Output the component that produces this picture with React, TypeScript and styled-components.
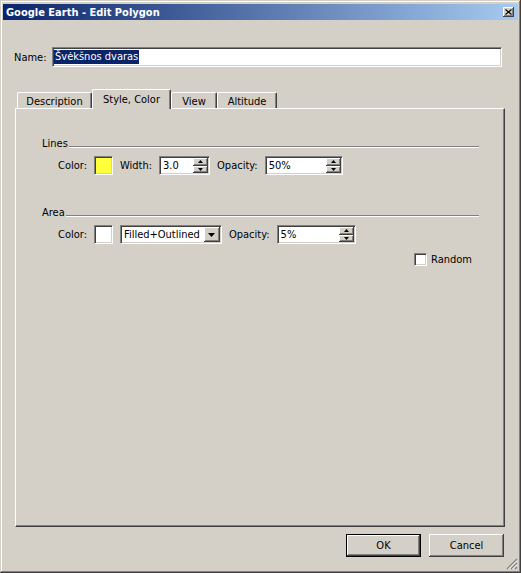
import styled, { createGlobalStyle, css } from "styled-components";

const GlobalStyle = createGlobalStyle`
  html, body {
    margin: 0;
    padding: 0;
    background: #d4d0c8;
  }
  * {
    box-sizing: border-box;
  }
  body {
    font-family: "DejaVu Sans Condensed", "Liberation Sans", Arial, sans-serif;
    font-size: 11px;
    color: #000;
  }
`;

const sunken = css`
  border: 1px solid;
  border-color: #808080 #ffffff #ffffff #808080;
  box-shadow: inset 1px 1px #404040, inset -1px -1px #d4d0c8;
`;

const raised = css`
  background: #d4d0c8;
  box-shadow: inset -1px -1px #404040, inset 1px 1px #ffffff,
    inset -2px -2px #808080, inset 2px 2px #d4d0c8;
`;

const Window = styled.div`
  position: relative;
  width: 521px;
  height: 573px;
  display: flex;
  flex-direction: column;
  padding: 3px;
  background: #d4d0c8;
  box-shadow: inset -1px -1px #404040, inset 1px 1px #d4d0c8,
    inset -2px -2px #808080, inset 2px 2px #ffffff;
`;

const TitleBar = styled.div`
  height: 16px;
  margin-top: 1px;
  display: flex;
  align-items: center;
  justify-content: space-between;
  padding: 0 3px;
  background: linear-gradient(to right, #0a246a, #a6caf0);
  color: #fff;
  font-weight: bold;
  font-size: 11px;
`;

const CloseBtn = styled.div`
  ${raised};
  width: 11px;
  height: 10px;
  display: flex;
  align-items: center;
  justify-content: center;
  margin-right: 1px;
`;

const Content = styled.div`
  flex: 1;
  display: flex;
  flex-direction: column;
  padding: 27px 13px 0 11px;
`;

const NameRow = styled.div`
  display: flex;
  align-items: center;
  height: 20px;
  padding-right: 3px;
`;

const NameLabel = styled.span`
  width: 38px;
`;

const NameField = styled.div`
  ${sunken};
  flex: 1;
  height: 20px;
  background: #fff;
  display: flex;
  align-items: center;
  padding: 0 1px;
`;

const Selected = styled.span`
  background: #0a246a;
  color: #fff;
  padding: 0 1px;
  line-height: 14px;
`;

const TabStrip = styled.div`
  margin-top: 22px;
  margin-left: 1px;
  height: 19px;
  display: flex;
  align-items: flex-end;
  padding-left: 2px;
  position: relative;
  z-index: 1;
`;

const Tab = styled.div<{ $w: number; $active?: boolean }>`
  width: ${({ $w }) => $w}px;
  height: ${({ $active }) => ($active ? 20 : 16)}px;
  margin-bottom: ${({ $active }) => ($active ? -1 : 0)}px;
  display: flex;
  justify-content: center;
  padding-top: ${({ $active }) => ($active ? 3 : 2)}px;
  background: #d4d0c8;
  border-top: 1px solid #fff;
  border-left: 1px solid #fff;
  border-right: 1px solid #404040;
  border-radius: 2px 2px 0 0;
  box-shadow: inset -1px 0 #808080;
`;

const Panel = styled.div`
  flex: 1;
  margin-left: 1px;
  border: 1px solid;
  border-color: #fff #404040 #404040 #fff;
  box-shadow: inset -1px -1px #808080;
  padding: 28px 25px 0 26px;
  display: flex;
  flex-direction: column;
`;

const GroupHeader = styled.div<{ $top?: number }>`
  display: flex;
  align-items: flex-end;
  height: 13px;
  line-height: 13px;
  margin-top: ${({ $top }) => $top ?? 0}px;
`;

const Rule = styled.div`
  flex: 1;
  height: 2px;
  margin: 0 0 2px 1px;
  border-top: 1px solid #808080;
  border-bottom: 1px solid #fff;
`;

const FieldRow = styled.div`
  display: flex;
  align-items: center;
  gap: 7px;
  height: 19px;
  margin-top: 6px;
  padding-left: 16px;
`;

const Swatch = styled.div<{ $fill: string }>`
  ${sunken};
  width: 19px;
  height: 19px;
  background: ${({ $fill }) => $fill};
`;

const SpinBox = styled.div<{ $w: number }>`
  ${sunken};
  width: ${({ $w }) => $w}px;
  height: 19px;
  background: #fff;
  display: flex;
  align-items: stretch;
  padding: 1px;
`;

const BoxText = styled.span`
  flex: 1;
  padding-left: 2px;
  line-height: 15px;
`;

const SpinButtons = styled.div`
  width: 15px;
  display: flex;
  flex-direction: column;
`;

const SpinBtn = styled.div`
  ${raised};
  flex: 1;
  display: flex;
  align-items: center;
  justify-content: center;
`;

const DropBtn = styled.div`
  ${raised};
  width: 16px;
  display: flex;
  align-items: center;
  justify-content: center;
`;

const RandomRow = styled.div`
  display: flex;
  justify-content: flex-end;
  align-items: center;
  margin-top: 9px;
  padding-right: 7px;
  height: 13px;
`;

const CheckBox = styled.div`
  ${sunken};
  width: 13px;
  height: 13px;
  background: #fff;
  margin-right: 4px;
`;

const ButtonRow = styled.div`
  display: flex;
  justify-content: flex-end;
  gap: 8px;
  margin: 7px 0 13px;
  padding-right: 1px;
`;

const Button = styled.div<{ $default?: boolean }>`
  width: 75px;
  height: 23px;
  display: flex;
  align-items: center;
  justify-content: center;
  ${raised};
  ${({ $default }) =>
    $default &&
    css`
      border: 1px solid #000;
    `}
`;

const Grip = styled.svg`
  position: absolute;
  right: 3px;
  bottom: 3px;
`;

const Arrow = ({ down }: { down?: boolean }) => (
  <svg width="5" height="3" viewBox="0 0 5 3">
    <polygon points={down ? "0,0 5,0 2.5,3" : "0,3 5,3 2.5,0"} fill="#000" />
  </svg>
);

function Spinner({ value, width }: { value: string; width: number }) {
  return (
    <SpinBox $w={width}>
      <BoxText>{value}</BoxText>
      <SpinButtons>
        <SpinBtn>
          <Arrow />
        </SpinBtn>
        <SpinBtn>
          <Arrow down />
        </SpinBtn>
      </SpinButtons>
    </SpinBox>
  );
}

export default function App() {
  return (
    <>
      <GlobalStyle />
      <Window>
        <TitleBar>
          <span>Google Earth - Edit Polygon</span>
          <CloseBtn>
            <svg width="7" height="6" viewBox="0 0 7 6">
              <path d="M0.5 0.5 L6.5 5.5 M6.5 0.5 L0.5 5.5" stroke="#000" strokeWidth="1.2" />
            </svg>
          </CloseBtn>
        </TitleBar>
        <Content>
          <NameRow>
            <NameLabel>Name:</NameLabel>
            <NameField>
              <Selected>Švėkšnos dvaras</Selected>
            </NameField>
          </NameRow>
          <TabStrip>
            <Tab $w={75}>Description</Tab>
            <Tab $w={79} $active>
              Style, Color
            </Tab>
            <Tab $w={46}>View</Tab>
            <Tab $w={60}>Altitude</Tab>
          </TabStrip>
          <Panel>
            <GroupHeader>
              <span>Lines</span>
              <Rule />
            </GroupHeader>
            <FieldRow>
              <span>Color:</span>
              <Swatch $fill="#ffff3c" />
              <span>Width:</span>
              <Spinner value="3.0" width={51} />
              <span>Opacity:</span>
              <Spinner value="50%" width={78} />
            </FieldRow>
            <GroupHeader $top={31}>
              <span>Area</span>
              <Rule />
            </GroupHeader>
            <FieldRow>
              <span>Color:</span>
              <Swatch $fill="#ffffff" />
              <SpinBox $w={102}>
                <BoxText>Filled+Outlined</BoxText>
                <DropBtn>
                  <svg width="7" height="4" viewBox="0 0 7 4">
                    <polygon points="0,0 7,0 3.5,4" fill="#000" />
                  </svg>
                </DropBtn>
              </SpinBox>
              <span>Opacity:</span>
              <Spinner value="5%" width={79} />
            </FieldRow>
            <RandomRow>
              <CheckBox />
              <span>Random</span>
            </RandomRow>
          </Panel>
          <ButtonRow>
            <Button $default>OK</Button>
            <Button>Cancel</Button>
          </ButtonRow>
        </Content>
        <Grip width="12" height="12" viewBox="0 0 12 12">
          <path d="M11 1 L1 11 M11 5 L5 11 M11 9 L9 11" stroke="#808080" strokeWidth="1.4" />
          <path d="M11 2.5 L2.5 11 M11 6.5 L6.5 11" stroke="#fff" strokeWidth="0.8" />
        </Grip>
      </Window>
    </>
  );
}
